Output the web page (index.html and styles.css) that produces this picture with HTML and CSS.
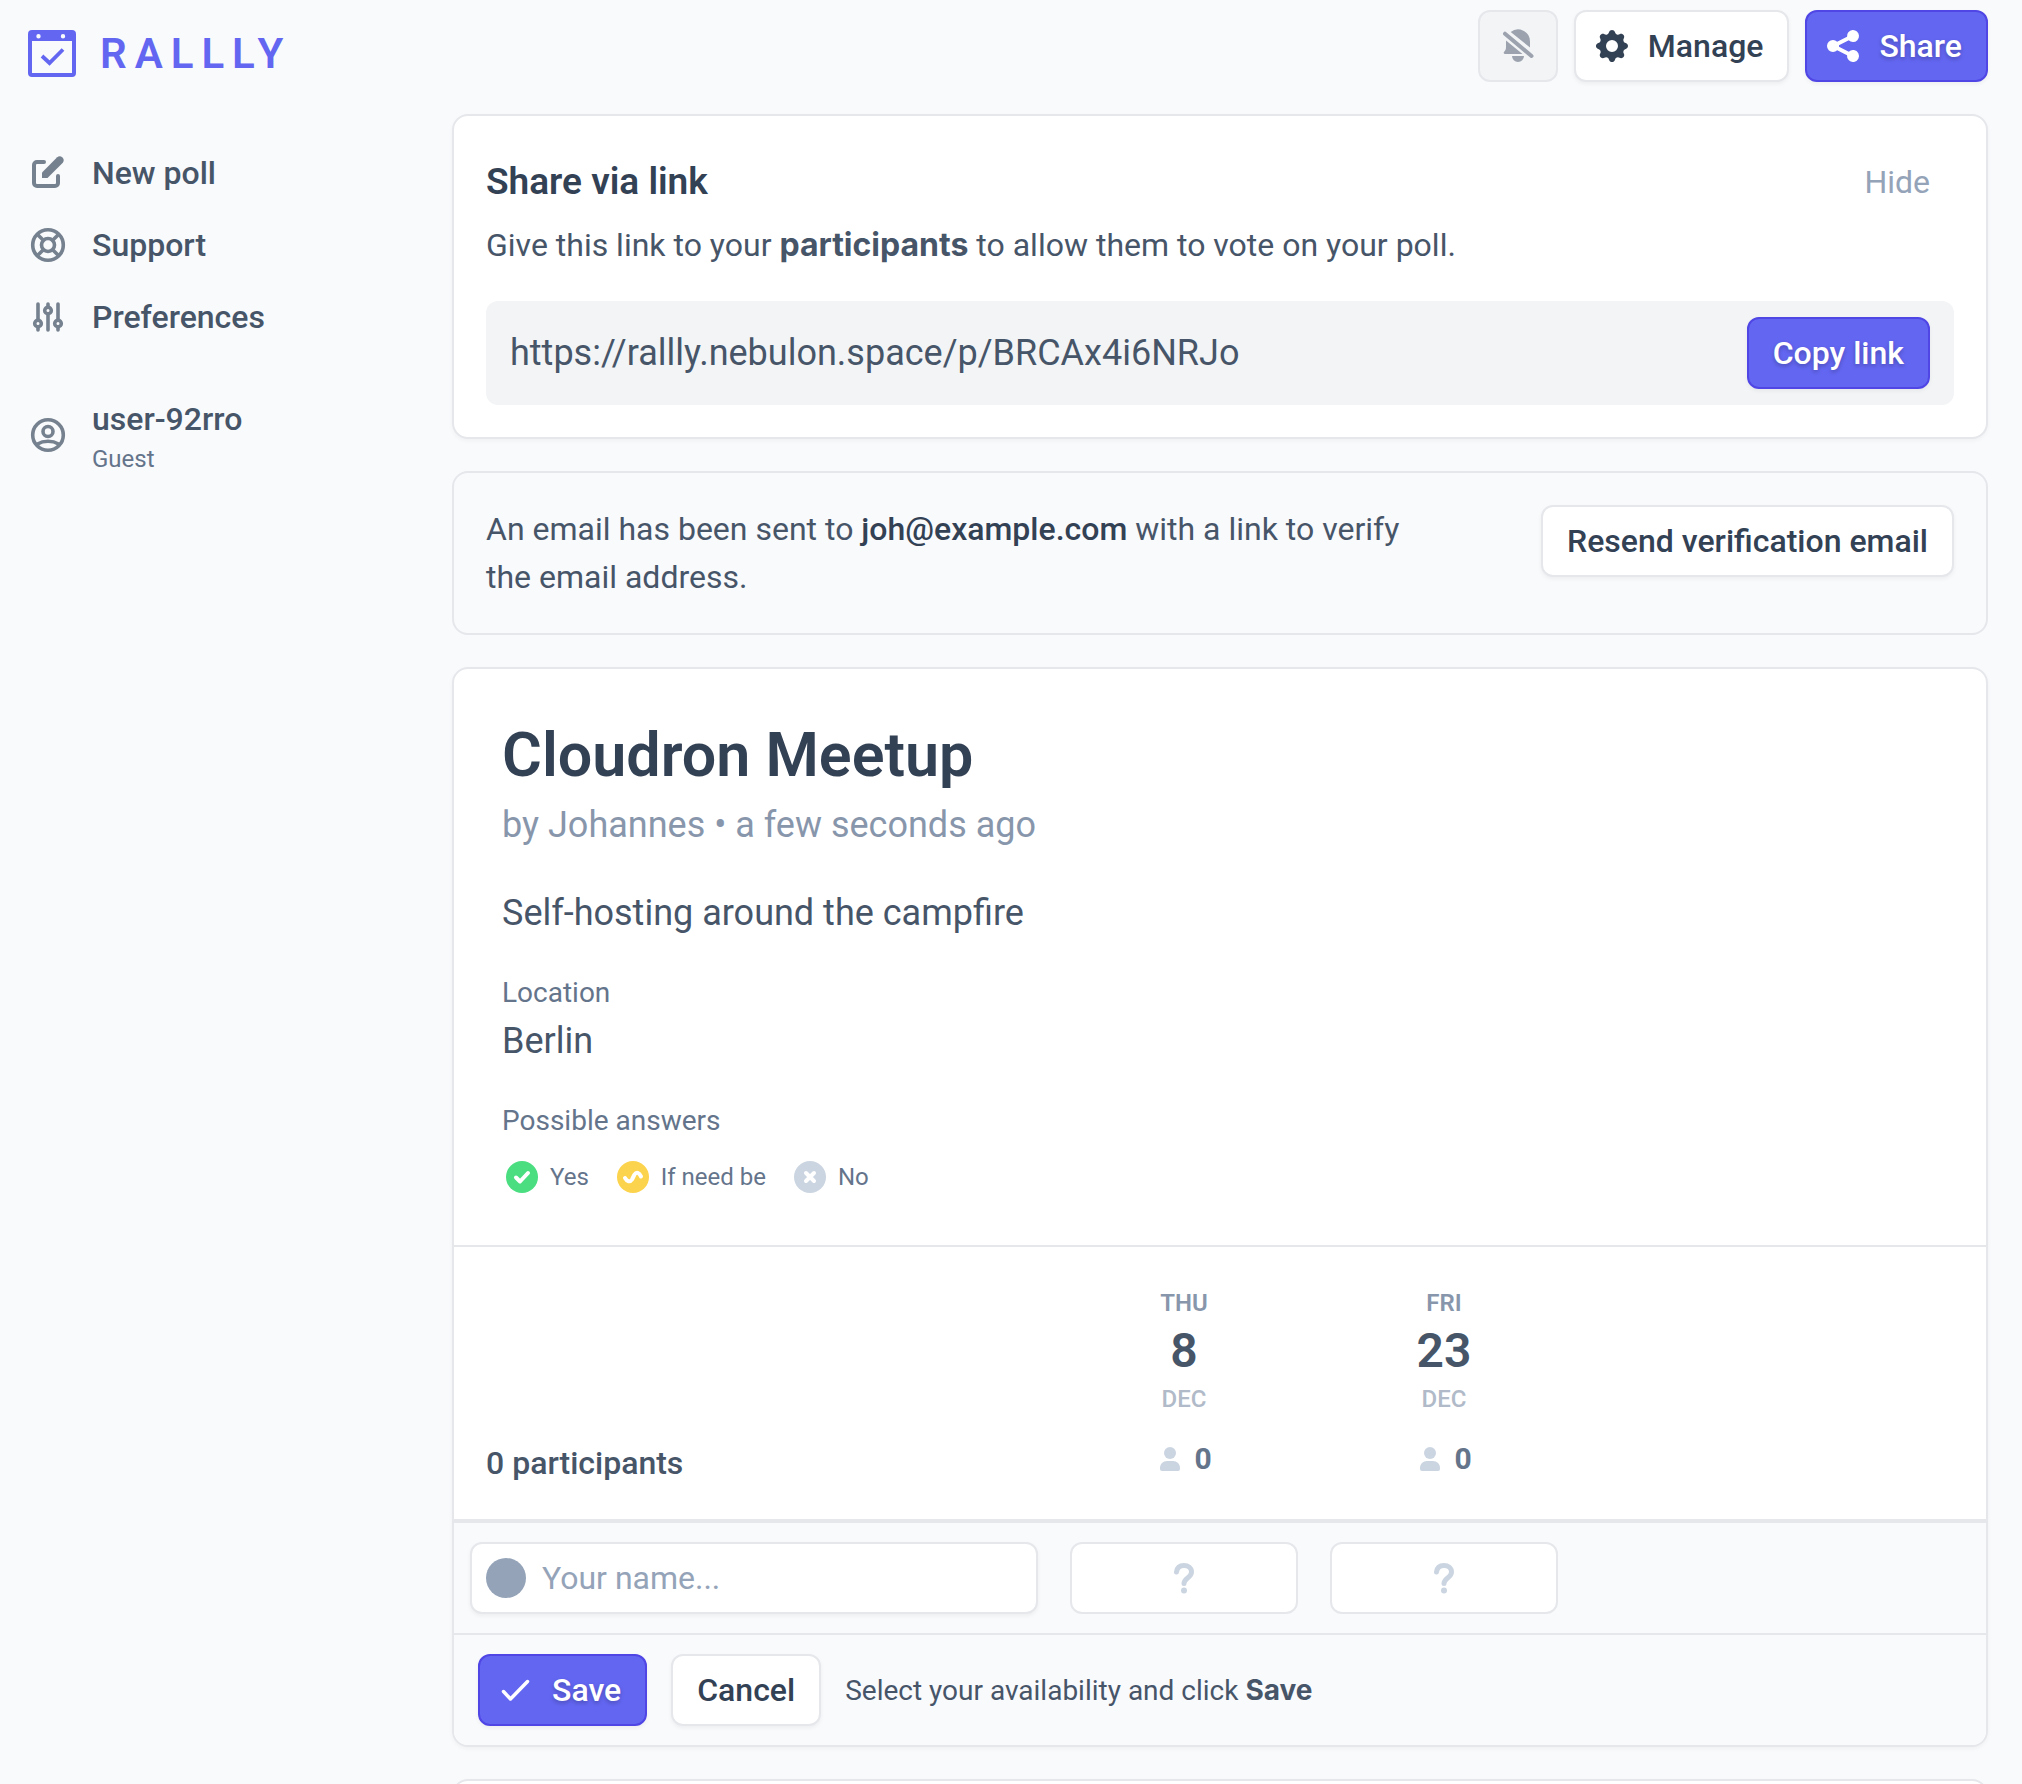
FILE: index.html
```html
<!DOCTYPE html>
<html lang="en">
<head>
  <meta charset="utf-8">
  <meta name="viewport" content="width=device-width, initial-scale=1">
  <title>Cloudron Meetup</title>
  <link rel="stylesheet" href="styles.css">
</head>
<body>
  <div class="layout">
    <aside class="sidebar">
      <a class="logo" href="#">
        <svg class="logo-mark" viewBox="0 0 48 48" aria-hidden="true">
          <path fill="currentColor" fill-rule="evenodd" d="M4 0h40a4 4 0 0 1 4 4v39a4 4 0 0 1-4 4H4a4 4 0 0 1-4-4V4a4 4 0 0 1 4-4zM4 11v32h40V11zM10.500 4a2.200 2.200 0 1 0 0 4.400a2.200 2.200 0 0 0 0-4.400zM35 4a2.200 2.200 0 1 0 0 4.400a2.200 2.200 0 0 0 0-4.400z"/>
          <path d="M14 26l7.500 7L35 19.500" fill="none" stroke="currentColor" stroke-width="3.800"/>
        </svg>
        <span class="logo-text">RALLLY</span>
      </a>
      <nav class="nav">
        <a class="nav-item" href="#">
          <svg class="icon" viewBox="0 0 40 40" aria-hidden="true">
            <path d="M16 9H9a3 3 0 0 0-3 3v18a3 3 0 0 0 3 3h18a3 3 0 0 0 3-3v-7" fill="none" stroke="currentColor" stroke-width="4" stroke-linecap="round"/>
            <path fill="currentColor" d="M29.200 4.200a4 4 0 0 1 5.600 5.600L19.500 25H14v-5.600z"/>
          </svg>
          New poll
        </a>
        <a class="nav-item" href="#">
          <svg class="icon line-icon" viewBox="0 0 40 40" aria-hidden="true">
            <circle cx="20" cy="20" r="15.300"/><circle cx="20" cy="20" r="6.500"/>
            <path d="M9.500 9.500l5.600 5.600M30.500 9.500l-5.600 5.600M9.500 30.500l5.600-5.600M30.500 30.500l-5.600-5.600"/>
          </svg>
          Support
        </a>
        <a class="nav-item" href="#">
          <svg class="icon line-icon" viewBox="0 0 40 40" aria-hidden="true">
            <path d="M10 7v16M10 30v3M20 7v3M20 17v16M30 7v16M30 30v3"/>
            <circle cx="10" cy="26.500" r="3.300"/><circle cx="20" cy="13.500" r="3.300"/><circle cx="30" cy="26.500" r="3.300"/>
          </svg>
          Preferences
        </a>
        <a class="nav-item nav-user" href="#">
          <svg class="icon line-icon" viewBox="0 0 40 40" aria-hidden="true">
            <circle cx="20" cy="20" r="15.300"/><circle cx="20" cy="16.500" r="5"/>
            <path d="M9.500 29c6-3.600 15-3.600 21 0"/>
          </svg>
          <span class="user">
            <span class="user-name">user-92rro</span>
            <span class="user-role">Guest</span>
          </span>
        </a>
      </nav>
    </aside>

    <main class="main">
      <div class="toolbar">
        <button class="btn btn-muted" type="button" disabled aria-label="Notifications are off">
          <svg class="icon" viewBox="0 0 40 40" aria-hidden="true">
            <path fill="currentColor" d="M12.700 6A12 12 0 0 1 32 15.500v6zM8 14.500L24.500 28H7a1.200 1.200 0 0 1-1-2c1.500-1.500 2-3 2-5zM14 30h12a6 6 0 0 1-12 0z"/>
            <path d="M7 7.700L33.500 30" fill="none" stroke="currentColor" stroke-width="4" stroke-linecap="round"/>
          </svg>
        </button>
        <button class="btn" type="button">
          <svg class="icon" viewBox="0 0 20 20" aria-hidden="true">
            <path fill="currentColor" fill-rule="evenodd" d="M11.490 3.170c-.38-1.560-2.600-1.560-2.980 0a1.532 1.532 0 0 1-2.286.948c-1.372-.836-2.942.734-2.106 2.106.54.886.061 2.042-.947 2.287-1.561.379-1.561 2.600 0 2.978a1.532 1.532 0 0 1 .947 2.287c-.836 1.372.734 2.942 2.106 2.106a1.532 1.532 0 0 1 2.287.947c.379 1.561 2.600 1.561 2.978 0a1.533 1.533 0 0 1 2.287-.947c1.372.836 2.942-.734 2.106-2.106a1.533 1.533 0 0 1 .947-2.287c1.561-.379 1.561-2.600 0-2.978a1.532 1.532 0 0 1-.947-2.287c.836-1.372-.734-2.942-2.106-2.106a1.532 1.532 0 0 1-2.287-.947zM10 13a3 3 0 1 0 0-6 3 3 0 0 0 0 6z"/>
          </svg>
          Manage
        </button>
        <button class="btn btn-primary" type="button">
          <svg class="icon" viewBox="0 0 20 20" aria-hidden="true">
            <path fill="currentColor" d="M15 8a3 3 0 1 0-2.977-2.630l-4.940 2.470a3 3 0 1 0 0 4.319l4.940 2.470a3 3 0 1 0 .895-1.789l-4.940-2.470a3.027 3.027 0 0 0 0-.740l4.940-2.470C13.456 7.680 14.190 8 15 8z"/>
          </svg>
          Share
        </button>
      </div>

      <section class="card share">
        <div class="share-head">
          <h2 class="share-title">Share via link</h2>
          <button class="hide" type="button">Hide</button>
        </div>
        <p class="share-text">Give this link to your <strong>participants</strong> to allow them to vote on your poll.</p>
        <div class="link-box">
          <span class="link-url">https://rallly.nebulon.space/p/BRCAx4i6NRJo</span>
          <button class="btn btn-primary" type="button">Copy link</button>
        </div>
      </section>

      <section class="card notice">
        <p class="notice-text">An email has been sent to <span class="email">joh@example.com</span> with a link to verify the email address.</p>
        <button class="btn" type="button">Resend verification email</button>
      </section>

      <section class="card poll">
        <header class="poll-info">
          <h1 class="poll-title">Cloudron Meetup</h1>
          <div class="poll-by">by Johannes • a few seconds ago</div>
          <p class="poll-text">Self-hosting around the campfire</p>
          <div class="label">Location</div>
          <p class="poll-place">Berlin</p>
          <div class="label">Possible answers</div>
          <ul class="answers">
            <li class="answer">
              <svg class="dot" viewBox="0 0 32 32" aria-hidden="true"><circle cx="16" cy="16" r="16" fill="#4ade80"/><path d="M10 16.500l4 4 8-8.500" class="dot-mark"/></svg>
              Yes
            </li>
            <li class="answer">
              <svg class="dot" viewBox="0 0 32 32" aria-hidden="true"><circle cx="16" cy="16" r="16" fill="#fcd34d"/><path d="M8 17c2 3.500 5 4.500 7 1.500l2.500-5c2-3 4.500-2 6.500 2" class="dot-mark"/></svg>
              If need be
            </li>
            <li class="answer">
              <svg class="dot" viewBox="0 0 32 32" aria-hidden="true"><circle cx="16" cy="16" r="16" fill="#cbd5e1"/><path d="M12 12l8 8M20 12l-8 8" class="dot-mark"/></svg>
              No
            </li>
          </ul>
        </header>

        <form class="vote">
          <table class="grid">
            <colgroup><col class="col-name"><col class="col-date"><col class="col-date"><col></colgroup>
            <thead>
              <tr>
                <th class="count" scope="col">0 participants</th>
                <th class="date" scope="col">
                  <div class="dow">Thu</div>
                  <div class="day">8</div>
                  <div class="month">Dec</div>
                  <div class="score">
                    <svg class="person" viewBox="0 0 20 24" aria-hidden="true"><circle cx="10" cy="6" r="6"/><path d="M0 22v-1c0-4 3-7 7-7h6c4 0 7 3 7 7v1a2 2 0 0 1-2 2H2a2 2 0 0 1-2-2z"/></svg>
                    0
                  </div>
                </th>
                <th class="date" scope="col">
                  <div class="dow">Fri</div>
                  <div class="day">23</div>
                  <div class="month">Dec</div>
                  <div class="score">
                    <svg class="person" viewBox="0 0 20 24" aria-hidden="true"><circle cx="10" cy="6" r="6"/><path d="M0 22v-1c0-4 3-7 7-7h6c4 0 7 3 7 7v1a2 2 0 0 1-2 2H2a2 2 0 0 1-2-2z"/></svg>
                    0
                  </div>
                </th>
                <td></td>
              </tr>
            </thead>
            <tbody>
              <tr>
                <td class="cell">
                  <label class="name">
                    <span class="avatar"></span>
                    <input class="name-input" type="text" placeholder="Your name..." aria-label="Your name">
                  </label>
                </td>
                <td class="cell">
                  <button class="choice" type="button" aria-label="Vote for Thu 8 Dec">
                    <svg class="question" viewBox="0 0 24 32" aria-hidden="true"><path d="M4.500 10C5 5.500 8 3.500 12 3.500s7.500 2.500 7.500 6.500c0 6-7.500 6-7.500 11.500"/><circle cx="12" cy="28.500" r="3"/></svg>
                  </button>
                </td>
                <td class="cell">
                  <button class="choice" type="button" aria-label="Vote for Fri 23 Dec">
                    <svg class="question" viewBox="0 0 24 32" aria-hidden="true"><path d="M4.500 10C5 5.500 8 3.500 12 3.500s7.500 2.500 7.500 6.500c0 6-7.500 6-7.500 11.500"/><circle cx="12" cy="28.500" r="3"/></svg>
                  </button>
                </td>
                <td class="cell"></td>
              </tr>
            </tbody>
          </table>
          <div class="actions">
            <button class="btn btn-primary" type="button">
              <svg class="icon" viewBox="0 0 40 40" aria-hidden="true"><path d="M7.500 21.500l7 7.500L31.500 11.500" fill="none" stroke="currentColor" stroke-width="3.500" stroke-linecap="round" stroke-linejoin="round"/></svg>
              Save
            </button>
            <button class="btn" type="button">Cancel</button>
            <p class="hint">Select your availability and click <strong>Save</strong></p>
          </div>
        </form>
      </section>

      <section class="card discussion"></section>
    </main>
  </div>
</body>
</html>
```
FILE: styles.css
```css
:root {
  --primary: #6366f1;
  --primary-dark: #4f46e5;
  --border: #e5e7eb;
  --page: #f9fafc;
  --ink: #334155;
  --text: #475569;
  --soft: #64748b;
  --faint: #94a3b8;
}

* {
  box-sizing: border-box;
}

body,
h1,
h2,
p,
ul {
  margin: 0;
  padding: 0;
}

html {
  scrollbar-width: none;
}

body {
  background: var(--page);
  color: var(--text);
  font: 400 32px/48px Roboto, "Liberation Sans", sans-serif;
}

a {
  color: inherit;
  text-decoration: none;
}

button,
input {
  font: inherit;
  color: inherit;
}

strong {
  font-family: Inter, Roboto, sans-serif;
  font-weight: 700;
}

.layout {
  display: grid;
  grid-template-columns: 452px minmax(0, 1fr);
  min-height: 100vh;
}

.sidebar {
  padding: 28px;
}

.logo {
  display: flex;
  align-items: center;
  gap: 24px;
  height: 52px;
  color: var(--primary);
}

.logo-mark {
  width: 48px;
  height: 48px;
}

.logo-text {
  font-size: 42px;
  font-weight: 600;
  letter-spacing: 8px;
}

.nav {
  display: flex;
  flex-direction: column;
  padding-top: 57px;
}

.nav-item {
  display: flex;
  align-items: center;
  gap: 24px;
  height: 72px;
  font-weight: 500;
}

.nav-user {
  height: 80px;
  margin-top: 42px;
}

.icon {
  flex: none;
  width: 40px;
  height: 40px;
}

.nav .icon {
  color: #75818f;
}

.line-icon {
  fill: none;
  stroke: currentColor;
  stroke-width: 3.6;
  stroke-linecap: round;
}

.user {
  display: flex;
  flex-direction: column;
}

.user-name {
  line-height: 48px;
}

.user-role {
  color: var(--soft);
  font-size: 24px;
  font-weight: 400;
  line-height: 32px;
}

.main {
  display: flex;
  flex-direction: column;
  gap: 32px;
  padding: 10px 34px 0 0;
}

.toolbar {
  display: flex;
  justify-content: flex-end;
  gap: 16px;
}

.btn {
  display: flex;
  flex: none;
  align-items: center;
  justify-content: center;
  gap: 16px;
  height: 72px;
  padding: 0 24px;
  border: 2px solid var(--border);
  border-radius: 12px;
  background: #fff;
  box-shadow: 0 2px 4px rgb(0 0 0 / 5%);
  color: var(--ink);
  font-weight: 500;
}

.btn:has(.icon) {
  padding-left: 16px;
}

.btn-muted,
.btn-muted:has(.icon) {
  padding: 0 18px;
  background: #f3f4f6;
  box-shadow: none;
  color: #9ca3af;
}

.btn-primary {
  border-color: var(--primary-dark);
  background: var(--primary);
  color: #fff;
  text-shadow: 0 2px 4px rgb(0 0 0 / 25%);
}

.card {
  border: 2px solid var(--border);
  border-radius: 16px;
  background: #fff;
  box-shadow: 0 2px 4px rgb(0 0 0 / 4%);
}

.share {
  padding: 32px;
}

.share-head {
  display: flex;
  align-items: center;
  justify-content: space-between;
  height: 68px;
}

.share-title {
  color: var(--ink);
  font-size: 37px;
  font-weight: 600;
}

.hide {
  padding: 0 24px;
  border: 0;
  background: none;
  color: var(--faint);
}

.share-text {
  padding: 5px 0 32px;
}

.link-box {
  display: flex;
  align-items: center;
  justify-content: space-between;
  padding: 16px 24px;
  border-radius: 12px;
  background: #f3f4f6;
}

.link-url {
  font-size: 36px;
}

.notice {
  display: flex;
  align-items: flex-start;
  justify-content: space-between;
  gap: 96px;
  padding: 32px;
  background: none;
  box-shadow: none;
}

.email {
  color: var(--ink);
  font-weight: 500;
}

.poll {
  overflow: hidden;
}

.poll-info {
  padding: 48px 48px 52px;
}

.poll-title {
  color: var(--ink);
  font-size: 61px;
  font-weight: 600;
  line-height: 76px;
}

.poll-by {
  padding-top: 8px;
  color: #8896ac;
  font-size: 36px;
}

.poll-text {
  padding: 40px 0 32px;
  font-size: 36px;
}

.label {
  color: var(--soft);
  font-size: 28px;
}

.poll-place {
  padding-bottom: 32px;
  font-size: 36px;
}

.answers {
  display: flex;
  gap: 28px;
  padding: 16px 4px 0;
  list-style: none;
}

.answer {
  display: flex;
  align-items: center;
  gap: 12px;
  color: var(--soft);
  font-size: 24px;
  line-height: 32px;
}

.dot {
  width: 32px;
  height: 32px;
}

.dot-mark {
  fill: none;
  stroke: #fff;
  stroke-width: 4;
  stroke-linecap: round;
  stroke-linejoin: round;
}

.grid {
  width: 100%;
  border-top: 2px solid var(--border);
  border-spacing: 0;
  table-layout: fixed;
}

.col-name {
  width: 600px;
}

.col-date {
  width: 260px;
}

.grid th,
.grid td {
  padding: 0;
}

.grid .count {
  padding: 0 32px 32px;
  font-weight: 500;
  text-align: left;
  vertical-align: bottom;
}

.grid .date {
  padding: 40px 0;
  text-align: center;
}

.dow,
.month {
  font-size: 24px;
  line-height: 32px;
  text-transform: uppercase;
}

.dow {
  color: #8896ac;
  font-weight: 600;
}

.day {
  font-size: 48px;
  font-weight: 600;
  line-height: 64px;
}

.month {
  color: #b0bac8;
  font-weight: 500;
}

.score {
  display: flex;
  align-items: center;
  justify-content: center;
  gap: 14px;
  padding: 24px 0 0 4px;
  color: var(--soft);
  font-size: 30px;
  font-weight: 700;
  line-height: 40px;
}

.person {
  width: 20px;
  height: 24px;
  fill: #cbd5e1;
}

.grid .cell {
  height: 114px;
  padding: 0 16px;
  border-top: 4px solid var(--border);
  background: var(--page);
}

.name {
  display: flex;
  align-items: center;
  gap: 16px;
  height: 72px;
  padding: 0 14px;
  border: 2px solid var(--border);
  border-radius: 12px;
  background: #fff;
  box-shadow: 0 2px 4px rgb(0 0 0 / 5%);
}

.avatar {
  flex: none;
  width: 40px;
  height: 40px;
  border-radius: 50%;
  background: var(--faint);
}

.name-input {
  flex: 1;
  min-width: 0;
  padding: 0;
  border: 0;
  outline: 0;
  background: none;
}

.name-input::placeholder {
  color: var(--faint);
  opacity: 1;
}

.choice {
  display: flex;
  align-items: center;
  justify-content: center;
  width: 100%;
  height: 72px;
  border: 2px solid var(--border);
  border-radius: 12px;
  background: #fff;
}

.question {
  width: 24px;
  height: 32px;
  fill: none;
  stroke: #cbd5e1;
  stroke-width: 5;
  stroke-linecap: round;
}

.question circle {
  fill: #cbd5e1;
  stroke: none;
}

.actions {
  display: flex;
  align-items: center;
  gap: 24px;
  height: 112px;
  padding: 0 24px;
  border-top: 2px solid var(--border);
  background: var(--page);
}

.hint {
  font-size: 28px;
}

.discussion {
  height: 160px;
}
```
